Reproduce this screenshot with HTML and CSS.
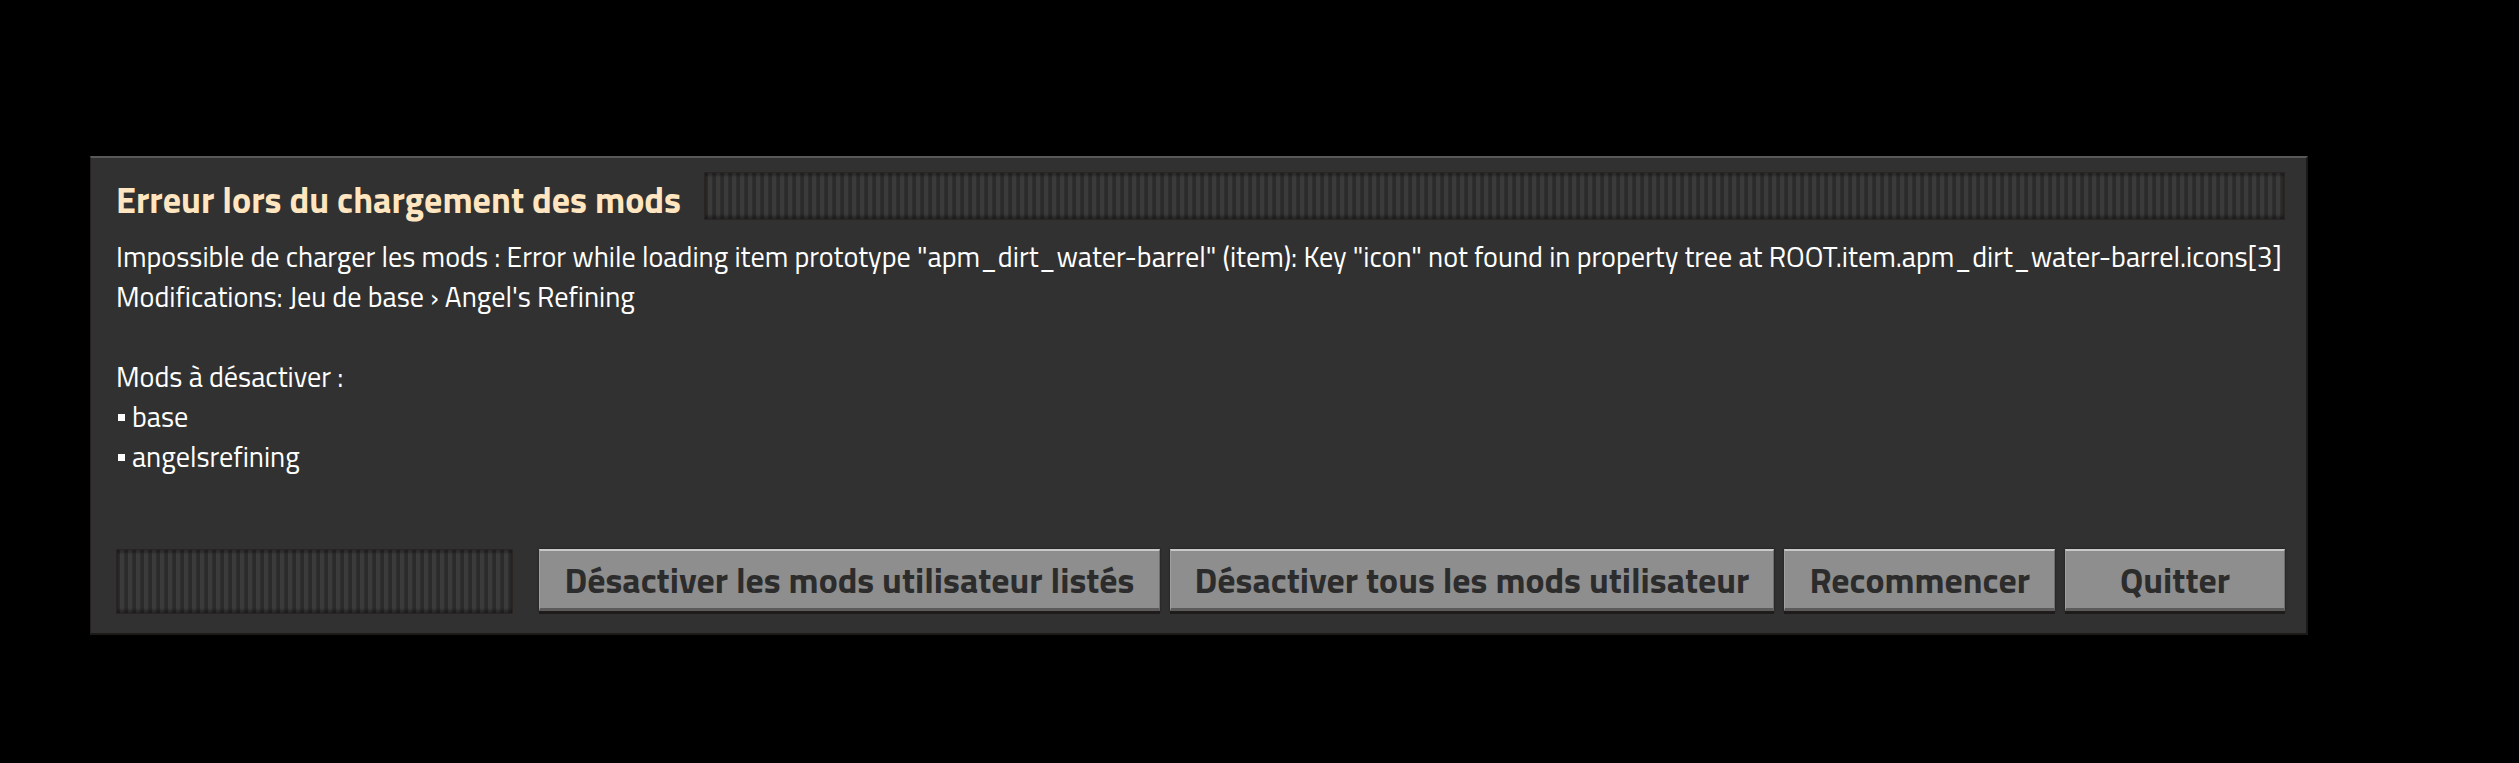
FILE: index.html
```html
<!DOCTYPE html>
<html lang="fr">

<head>
    <meta charset="UTF-8">
    <meta name="viewport" content="width=device-width, initial-scale=1.0">
    <title>Erreur lors du chargement des mods</title>
    <link rel="stylesheet" href="styles.css">
</head>

<body>
    <div class="dialog">
        <div class="dialog-title">
            <h1>Erreur lors du chargement des mods</h1>
            <div class="filler"></div>
        </div>

        <div class="dialog-body">
            <p>Impossible de charger les mods : Error while loading item prototype "apm_dirt_water-barrel" (item): Key "icon" not found in property tree at ROOT.item.apm_dirt_water-barrel.icons[3]</p>
            <p>Modifications: Jeu de base › Angel's Refining</p>
            <p>&nbsp;</p>
            <p>Mods à désactiver :</p>
            <ul class="mod-list">
                <li>base</li>
                <li>angelsrefining</li>
            </ul>
        </div>

        <div class="dialog-buttons">
            <div class="filler"></div>
            <button class="btn">Désactiver les mods utilisateur listés</button>
            <button class="btn">Désactiver tous les mods utilisateur</button>
            <button class="btn">Recommencer</button>
            <button class="btn btn-quit">Quitter</button>
        </div>
    </div>
</body>

</html>
```

FILE: styles.css
```css
body {
    margin: 0;
    background: #000;
    font-family: "Titillium Web", "Open Sans", sans-serif;
    height: 763px;
}

.dialog {
    position: relative;
    top: 156px;
    margin-left: 90px;
    width: 2218px;
    height: 479px;
    box-sizing: border-box;
    background: #313131;
    border-top: 2px solid #585858;
    border-left: 1px solid #262221;
    border-right: 2px solid #1c1a19;
    border-bottom: 2px solid #1c1a19;
    padding: 14px 21px 19px 25px;
    display: flex;
    flex-direction: column;
}

.dialog-title {
    display: flex;
    align-items: center;
    gap: 23px;
    height: 48px;
}

.dialog-title h1 {
    margin: 7px 0 0;
    font-size: 36px;
    font-weight: bold;
    color: #ffe6c0;
    white-space: nowrap;
}

.filler {
    flex: 1;
    align-self: stretch;
    border: 1px solid #2a2523;
    background: repeating-linear-gradient(90deg, #2b2b2b 0px, #2b2b2b 3px, #3b3b3b 3px, #3b3b3b 7px, #2f2f2f 7px, #2f2f2f 8px);
    box-shadow: inset 0 -3px 3px rgba(0, 0, 0, 0.35), inset 0 3px 2px rgba(0, 0, 0, 0.25);
}

.dialog-body {
    margin-top: 17px;
    color: #ffffff;
    font-size: 28.2px;
    line-height: 40px;
}

.dialog-body p {
    margin: 0;
    white-space: nowrap;
}

.mod-list {
    margin: 0;
    padding: 0;
    list-style: none;
}

.mod-list li::before {
    content: "";
    display: inline-block;
    width: 7px;
    height: 7px;
    background: #fff;
    margin: 0 7px 4px 2px;
    vertical-align: middle;
}

.dialog-buttons {
    margin-top: auto;
    display: flex;
    gap: 10px;
    height: 65px;
}

.dialog-buttons .filler {
    margin-right: 16px;
}

.btn {
    height: 62px;
    padding: 0 24px;
    font-family: inherit;
    font-size: 35.8px;
    font-weight: bold;
    color: #2c2c2c;
    background: #8e8e8e;
    border: none;
    border-top: 2px solid #c9c9c9;
    border-left: 1px solid #a0a0a0;
    border-right: 1px solid #6e6e6e;
    border-bottom: 3px solid #5b5b5b;
    box-shadow: 0 3px 0 #1e1b1a, 0 0 2px #1e1b1a;
    white-space: nowrap;
}

.btn-quit {
    width: 220px;
}
```
